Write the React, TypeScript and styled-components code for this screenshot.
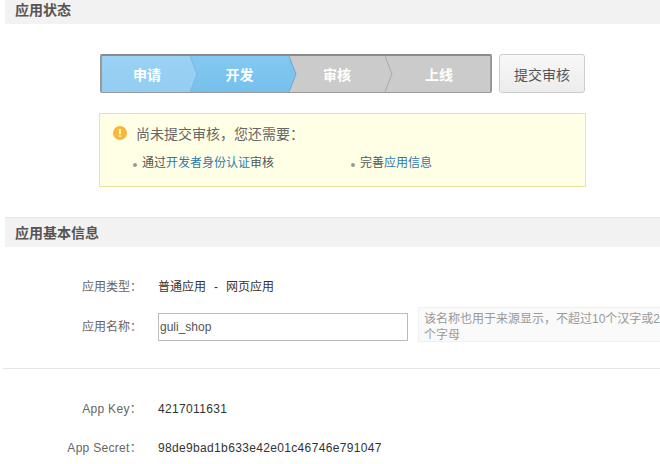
import styled, { createGlobalStyle } from "styled-components";

const GlobalStyle = createGlobalStyle`
    html, body {
        margin: 0;
        padding: 0;
        background: #fff;
        overflow: hidden;
    }
    body {
        font-family: "Liberation Sans", "Noto Sans CJK SC", sans-serif;
        font-size: 12px;
        color: #333;
    }
`;

type StepData = { name: string; tone: "light" | "active" | "idle"; width: number; shift: number };

const steps: StepData[] = [
    { name: "申请", tone: "light", width: 88, shift: 2 },
    { name: "开发", tone: "active", width: 99, shift: 0 },
    { name: "审核", tone: "idle", width: 96, shift: 0 },
    { name: "上线", tone: "idle", width: 105, shift: 3 },
];

const STEP_BG = {
    light: "linear-gradient(#9bd2f5, #93cdf2)",
    active: "linear-gradient(#84c9f1, #75c0ec)",
    idle: "#cbcbcb",
};
const STEP_FILL = { light: "#97d0f3", active: "#7cc4ee", idle: "#cbcbcb" };
const EDGE = { light: "#78b8e0", active: "#66a9d6", idle: "#a9a9a9" };

export default function App() {
    return (
        <Page>
            <GlobalStyle />
            <SectionTitle $first>应用状态</SectionTitle>

            <StatusRow>
                <StepBar>
                    {steps.map((step, idx) => (
                        <Step
                            key={step.name}
                            $tone={step.tone}
                            $width={step.width}
                            $shift={step.shift}
                            $order={steps.length - idx}
                        >
                            {step.name}
                            {idx < steps.length - 1 && (
                                <Chevron viewBox="0 0 8 36" preserveAspectRatio="none">
                                    <polygon points="0,0 7,18 0,36" fill={STEP_FILL[step.tone]} />
                                    <polyline
                                        points="0,0 7,18 0,36"
                                        fill="none"
                                        stroke={EDGE[step.tone]}
                                        strokeWidth="1"
                                    />
                                </Chevron>
                            )}
                        </Step>
                    ))}
                </StepBar>
                <SubmitButton>提交审核</SubmitButton>
            </StatusRow>

            <Notice>
                <NoticeHead>
                    <WarnIcon>!</WarnIcon>
                    尚未提交审核，您还需要：
                </NoticeHead>
                <NoticeList>
                    <NoticeItem>
                        通过<NoticeLink>开发者身份认证</NoticeLink>审核
                    </NoticeItem>
                    <NoticeItem>
                        完善<NoticeLink>应用信息</NoticeLink>
                    </NoticeItem>
                </NoticeList>
            </Notice>

            <SectionTitle>应用基本信息</SectionTitle>

            <TypeRow>
                <Label>应用类型：</Label>
                <Value>
                    普通应用<Dash>-</Dash>网页应用
                </Value>
            </TypeRow>

            <NameRow>
                <Label>应用名称：</Label>
                <NameInput defaultValue="guli_shop" />
                <Hint>该名称也用于来源显示，不超过10个汉字或20个字母</Hint>
            </NameRow>

            <Divider />

            <KeyRow>
                <Label $latin>App Key：</Label>
                <Value $latin>4217011631</Value>
            </KeyRow>
            <SecretRow>
                <Label $latin>App Secret：</Label>
                <Value $latin>98de9bad1b633e42e01c46746e791047</Value>
            </SecretRow>
        </Page>
    );
}

const Page = styled.div`
    width: 660px;
    height: 464px;
    overflow: hidden;
`;

const SectionTitle = styled.h2<{ $first?: boolean }>`
    margin: ${({ $first }) => ($first ? "0" : "30px")} 0 0 5px;
    padding-left: 10px;
    height: ${({ $first }) => ($first ? "24px" : "29px")};
    line-height: ${({ $first }) => ($first ? "20px" : "31px")};
    background: #f2f2f2;
    border-top: ${({ $first }) => ($first ? "none" : "1px solid #e6e6e6")};
    font-size: 14px;
    font-weight: bold;
    color: #555;
`;

const StatusRow = styled.div`
    display: flex;
    align-items: flex-start;
    gap: 7px;
    margin: 30px 0 0 100px;
`;

const StepBar = styled.div`
    display: flex;
    box-sizing: border-box;
    width: 392px;
    height: 39px;
    border: 2px solid #999;
    border-top-color: #8a8a8a;
    border-bottom-width: 1px;
    border-radius: 2px;
    overflow: hidden;
`;

const Step = styled.div<{
    $tone: StepData["tone"];
    $width: number;
    $shift: number;
    $order: number;
}>`
    position: relative;
    z-index: ${({ $order }) => $order};
    box-sizing: border-box;
    display: flex;
    align-items: center;
    justify-content: center;
    width: ${({ $width }) => $width}px;
    padding-left: ${({ $shift }) => $shift}px;
    background: ${({ $tone }) => STEP_BG[$tone]};
    color: #fff;
    font-size: 14px;
    font-weight: bold;
`;

const Chevron = styled.svg`
    position: absolute;
    top: 0;
    left: 100%;
    width: 8px;
    height: 100%;
`;

const SubmitButton = styled.button`
    width: 86px;
    height: 39px;
    padding: 0;
    border: 1px solid #ccc;
    border-radius: 3px;
    background: linear-gradient(#f8f8f8, #ececec);
    color: #555;
    font-family: inherit;
    font-size: 14px;
`;

const Notice = styled.div`
    box-sizing: border-box;
    width: 487px;
    height: 74px;
    margin: 20px 0 0 99px;
    padding: 9px 13px;
    background: #ffffe5;
    border: 1px solid #ece69c;
`;

const NoticeHead = styled.div`
    display: flex;
    align-items: center;
    gap: 9px;
    height: 20px;
    font-size: 14px;
    color: #666;
`;

const WarnIcon = styled.span`
    display: flex;
    align-items: center;
    justify-content: center;
    width: 14px;
    height: 14px;
    border-radius: 50%;
    background: #f7b73c;
    color: #fff;
    font-size: 11px;
    font-weight: bold;
`;

const NoticeList = styled.ul`
    display: grid;
    grid-template-columns: 218px 1fr;
    margin: 10px 0 0;
    padding: 0 0 0 19px;
    list-style: none;
`;

const NoticeItem = styled.li`
    position: relative;
    padding-left: 10px;
    line-height: 20px;
    color: #555;

    &::before {
        content: "";
        position: absolute;
        left: 1px;
        top: 10px;
        width: 4px;
        height: 4px;
        border-radius: 50%;
        background: #999;
    }
`;

const NoticeLink = styled.a`
    color: #2a7ab0;
`;

const Row = styled.div`
    display: grid;
    grid-template-columns: 158px 1fr;
    align-items: center;
`;

const TypeRow = styled(Row)`
    margin-top: 30px;
    height: 20px;
`;

const NameRow = styled(Row)`
    grid-template-columns: 158px 260px 1fr;
    margin-top: 14px;
    height: 30px;
`;

const KeyRow = styled(Row)`
    margin-top: 30px;
    height: 20px;
`;

const SecretRow = styled(Row)`
    margin-top: 19px;
    height: 20px;
`;

const Label = styled.div<{ $latin?: boolean }>`
    padding-right: 16px;
    line-height: 16px;
    text-align: right;
    color: #666;
    white-space: nowrap;
    letter-spacing: ${({ $latin }) => ($latin ? "0.3px" : "0")};
`;

const Value = styled.div<{ $latin?: boolean }>`
    line-height: 16px;
    color: #333;
    white-space: nowrap;
    letter-spacing: ${({ $latin }) => ($latin ? "0.34px" : "0")};
`;

const Dash = styled.span`
    margin: 0 8px;
`;

const NameInput = styled.input`
    box-sizing: border-box;
    width: 250px;
    height: 28px;
    padding: 0 1px;
    border: 1px solid #bbb;
    outline: none;
    font-family: inherit;
    font-size: 12px;
    color: #555;
`;

const Hint = styled.div`
    align-self: start;
    box-sizing: border-box;
    width: 262px;
    height: 35px;
    margin-top: -4px;
    padding: 3px 5px;
    line-height: 16px;
    background: #fafafa;
    border: 1px solid #f0f0f0;
    color: #999;
`;

const Divider = styled.hr`
    margin: 27px 0 0 3px;
    border: 0;
    border-top: 1px solid #e6e6e6;
`;
